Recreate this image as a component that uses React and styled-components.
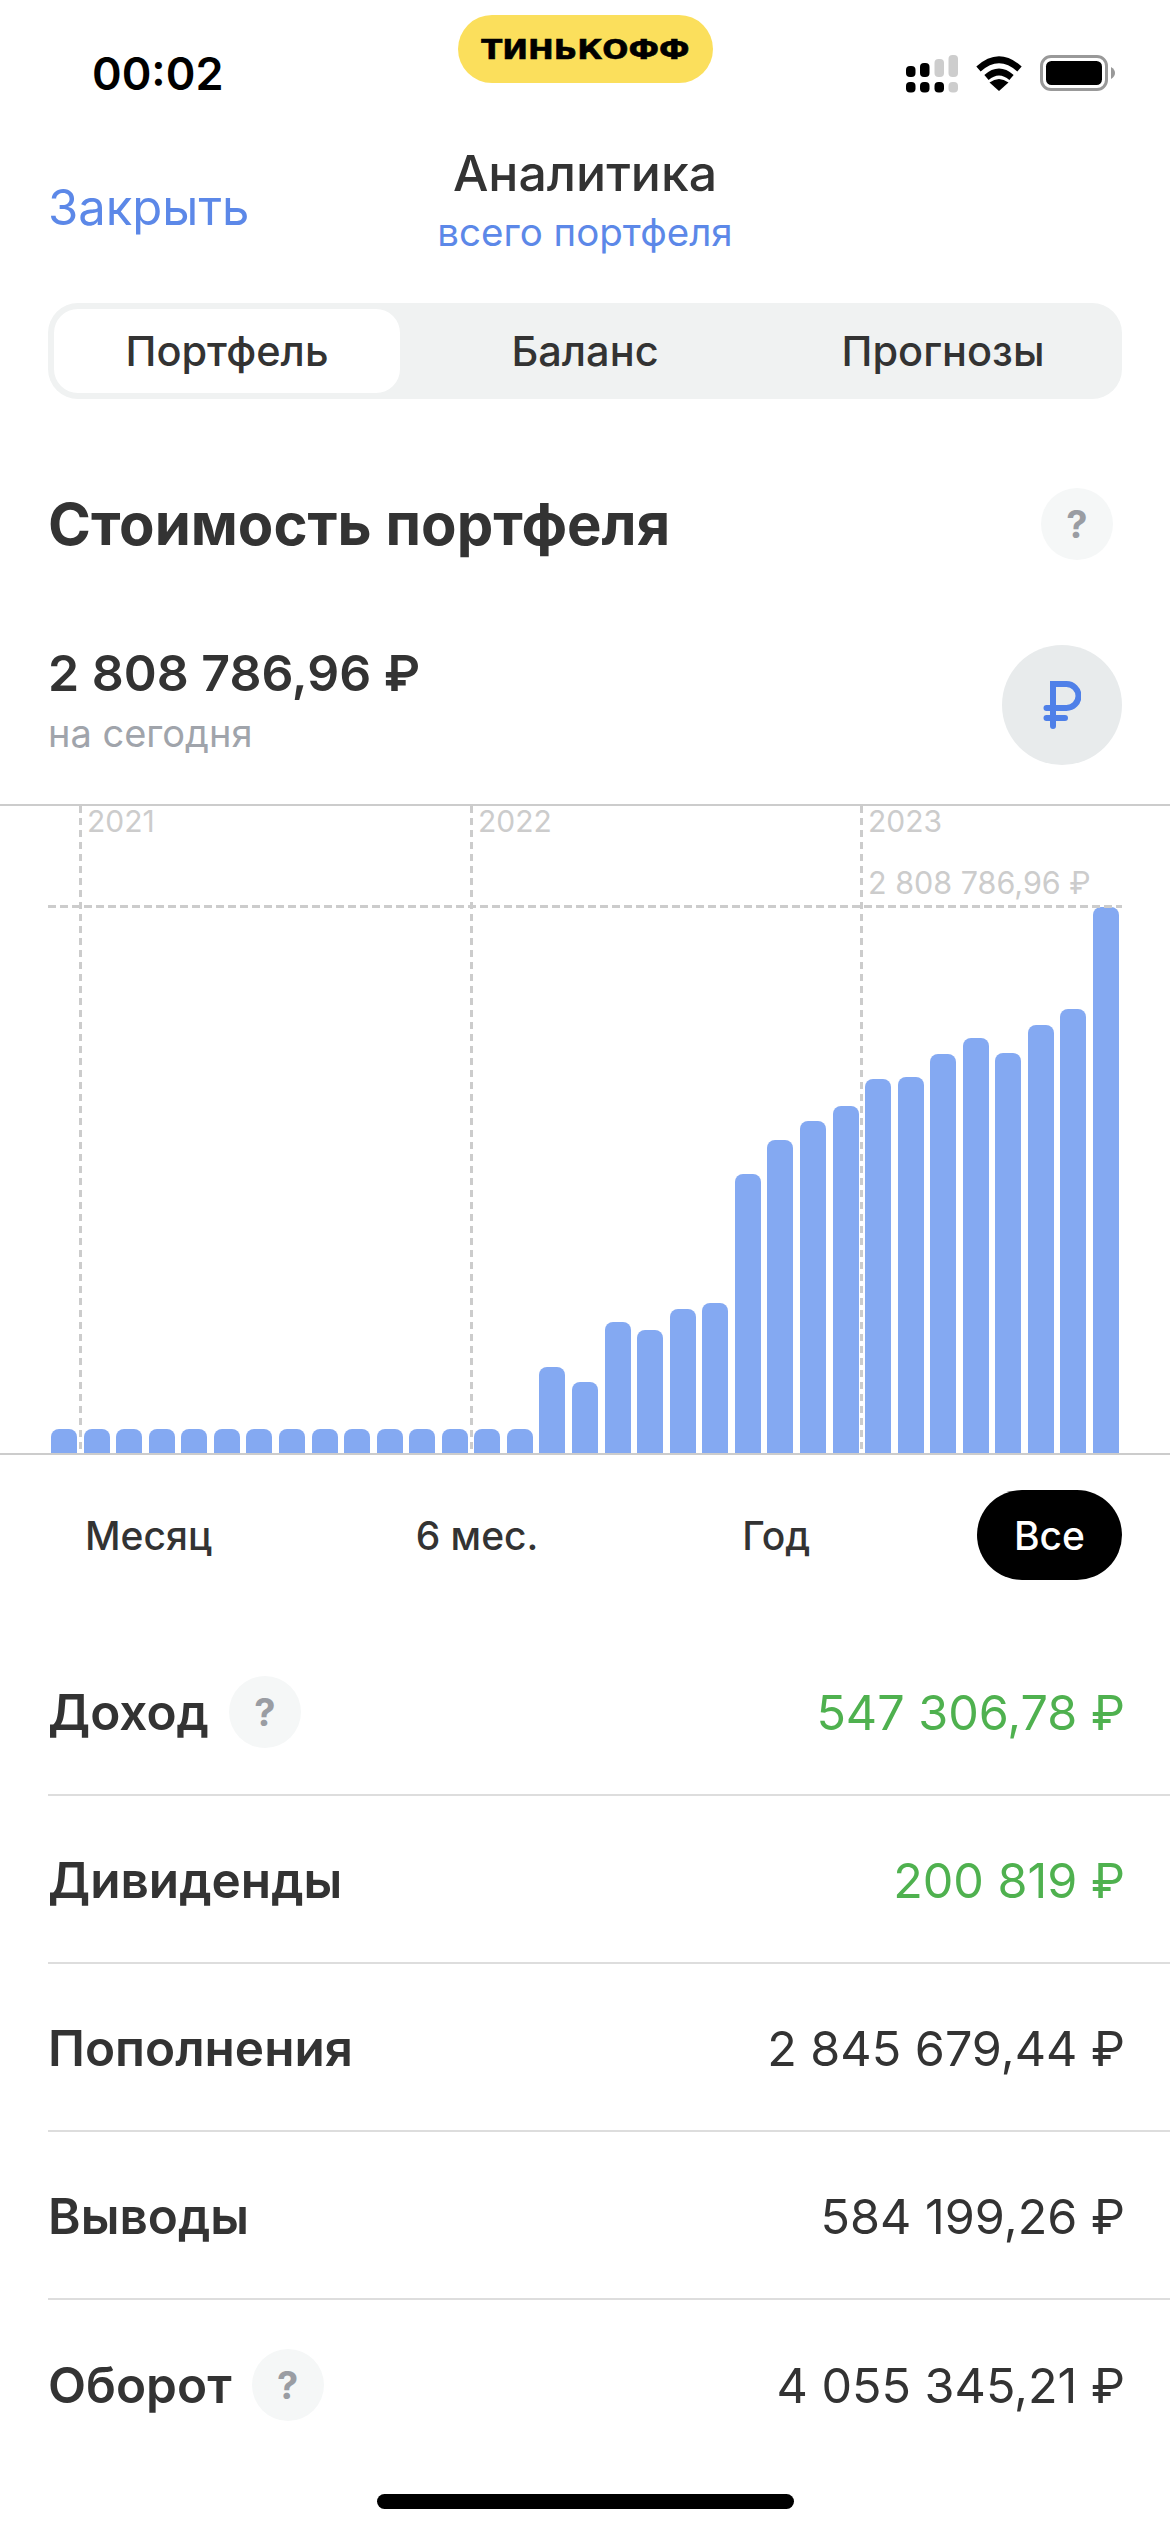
import React from "react";
import styled, {createGlobalStyle} from "styled-components";

const GlobalStyle = createGlobalStyle`
    html, body {
        margin: 0;
        padding: 0;
        background: #fff;
    }

    body {
        font-family: Inter, "Liberation Sans", sans-serif;
        color: #333;
        -webkit-font-smoothing: antialiased;
    }
`;

const barTops = [
    1429, 1429, 1429, 1429, 1429, 1429, 1429, 1429, 1429, 1429, 1429, 1429, 1429, 1429, 1429,
    1367, 1382, 1322, 1330, 1309, 1303, 1174, 1140, 1121, 1106, 1079, 1077, 1054, 1038, 1053, 1025, 1009, 907,
];
const CHART_BOTTOM = 1453;

const rows = [
    {label: "Доход", value: "547 306,78 ₽", green: true, help: true},
    {label: "Дивиденды", value: "200 819 ₽", green: true},
    {label: "Пополнения", value: "2 845 679,44 ₽"},
    {label: "Выводы", value: "584 199,26 ₽"},
    {label: "Оборот", value: "4 055 345,21 ₽", help: true},
];

const SignalIcon = () => (
    <svg width="52" height="38" viewBox="0 0 52 38">
        <g fill="#000">
            <rect x="0" y="11" width="9.5" height="11" rx="4"/>
            <rect x="14" y="8" width="9.5" height="14" rx="4"/>
            <rect x="0" y="27" width="9.5" height="10.5" rx="4"/>
            <rect x="14" y="27" width="9.5" height="10.5" rx="4"/>
            <rect x="28.5" y="27" width="9.5" height="10.5" rx="4"/>
        </g>
        <g fill="#cdcdcd">
            <rect x="28.5" y="4" width="9.5" height="18" rx="4"/>
            <rect x="42.5" y="0" width="9.5" height="22" rx="4"/>
            <rect x="42.5" y="27" width="9.5" height="10.5" rx="4"/>
        </g>
    </svg>
);

const WifiIcon = () => (
    <svg width="48" height="36" viewBox="0 0 48 36">
        <path d="M3.5 14 Q24 -4.5 44.5 14" fill="none" stroke="#000" strokeWidth="6.5"/>
        <path d="M11.5 22.5 Q24 11.5 36.5 22.5" fill="none" stroke="#000" strokeWidth="6.5"/>
        <path d="M24 36 L14.5 27.5 Q24 20.5 33.5 27.5 Z" fill="#000"/>
    </svg>
);

const BatteryIcon = () => (
    <svg width="75" height="36" viewBox="0 0 75 36">
        <rect x="1.5" y="1.5" width="65" height="33" rx="9.5" fill="none" stroke="#999" strokeWidth="3"/>
        <rect x="6" y="6" width="56" height="24" rx="5.5" fill="#000"/>
        <path d="M71 12 Q75 14.5 75 18 Q75 21.5 71 24 Z" fill="#999"/>
    </svg>
);

const RubleIcon = () => (
    <svg width="38" height="48" viewBox="0 0 38 48">
        <path
            d="M10 45 V3 H23.5 A12 12 0 0 1 23.5 27 H3.5 M3.5 37 H22"
            fill="none"
            stroke="#4f80e8"
            strokeWidth="6"
            strokeLinecap="round"
            strokeLinejoin="miter"
        />
    </svg>
);

function App() {
    return (
        <Page>
            <GlobalStyle/>
            <StatusBar>
                <Time>00:02</Time>
                <BrandPill><BrandText>ТИНЬКОФФ</BrandText></BrandPill>
                <StatusIcons>
                    <SignalIcon/>
                    <WifiIcon/>
                    <BatteryIcon/>
                </StatusIcons>
            </StatusBar>

            <Nav>
                <CloseLink>Закрыть</CloseLink>
                <NavTitle>
                    <NavHeading>Аналитика</NavHeading>
                    <NavSub>всего портфеля</NavSub>
                </NavTitle>
            </Nav>

            <Tabs>
                <Tab $active>Портфель</Tab>
                <Tab>Баланс</Tab>
                <Tab>Прогнозы</Tab>
            </Tabs>

            <TitleRow>
                <Title>Стоимость портфеля</Title>
                <HelpBadge>?</HelpBadge>
            </TitleRow>

            <ValueRow>
                <div>
                    <ValueText>2 808 786,96 ₽</ValueText>
                    <ValueCaption>на сегодня</ValueCaption>
                </div>
                <CurrencyButton><RubleIcon/></CurrencyButton>
            </ValueRow>

            <Chart>
                <YearLine $left={79}/>
                <YearLine $left={470}/>
                <YearLine $left={860}/>
                <MaxLine/>
                <YearLabel $left={87}>2021</YearLabel>
                <YearLabel $left={478}>2022</YearLabel>
                <YearLabel $left={868}>2023</YearLabel>
                <MaxLabel>2 808 786,96 ₽</MaxLabel>
                {barTops.map((top, i) => (
                    <Bar key={i} style={{height: CHART_BOTTOM - top}}/>
                ))}
            </Chart>

            <Periods>
                <Period>Месяц</Period>
                <Period>6 мес.</Period>
                <Period>Год</Period>
                <Period $active>Все</Period>
            </Periods>

            <List>
                {rows.map((row) => (
                    <Row key={row.label}>
                        <RowLabel>
                            {row.label}
                            {row.help && <HelpBadge>?</HelpBadge>}
                        </RowLabel>
                        <RowValue $green={row.green}>{row.value}</RowValue>
                    </Row>
                ))}
            </List>

            <HomeIndicator/>
        </Page>
    );
}

export default App;

const Page = styled.div`
    width: 1170px;
    height: 2532px;
    overflow: hidden;
    display: flex;
    flex-direction: column;
    background: #fff;
`;

const StatusBar = styled.div`
    height: 130px;
    padding: 0 55px 0 92px;
    box-sizing: border-box;
    display: grid;
    grid-template-columns: 1fr 255px 1fr;
    align-items: start;
`;

const Time = styled.div`
    margin-top: 46px;
    font-size: 45px;
    line-height: 56px;
    font-weight: 600;
    color: #000;
`;

const BrandPill = styled.div`
    margin-top: 15px;
    margin-left: -18px;
    width: 255px;
    height: 68px;
    border-radius: 34px;
    background: #fbdf5c;
    display: flex;
    align-items: center;
    justify-content: center;
`;

const BrandText = styled.span`
    font-family: "DejaVu Sans", sans-serif;
    font-size: 27px;
    font-weight: 700;
    line-height: 1;
    color: #000;
    white-space: nowrap;
    transform: scaleX(1.14);
    -webkit-text-stroke: 0.6px #000;
`;

const StatusIcons = styled.div`
    margin-top: 55px;
    display: flex;
    justify-content: flex-end;
    align-items: flex-start;
    gap: 17px;
`;

const Nav = styled.div`
    height: 173px;
    padding: 0 48px;
    display: grid;
    grid-template-columns: 1fr auto 1fr;
    align-items: start;
    box-sizing: border-box;
`;

const CloseLink = styled.div`
    grid-column: 1;
    margin-top: 48px;
    font-size: 49px;
    line-height: 60px;
    color: #5c88e8;
`;

const NavTitle = styled.div`
    grid-column: 2;
    padding-top: 13px;
    display: flex;
    flex-direction: column;
    align-items: center;
`;

const NavHeading = styled.div`
    font-size: 50px;
    line-height: 60px;
    font-weight: 500;
`;

const NavSub = styled.div`
    margin-top: 4px;
    font-size: 38.5px;
    line-height: 50px;
    color: #5c88e8;
`;

const Tabs = styled.div`
    margin: 0 48px;
    height: 96px;
    padding: 6px;
    box-sizing: border-box;
    border-radius: 30px;
    background: #f0f2f2;
    display: grid;
    grid-template-columns: 346px 370px 346px;
`;

const Tab = styled.div`
    border-radius: 24px;
    background: ${(p) => (p.$active ? "#fff" : "transparent")};
    display: flex;
    align-items: center;
    justify-content: center;
    font-size: 41.5px;
    font-weight: 500;
`;

const TitleRow = styled.div`
    margin-top: 89px;
    padding: 0 57px 0 48px;
    display: flex;
    align-items: center;
    justify-content: space-between;
`;

const Title = styled.h1`
    margin: 0;
    font-size: 58px;
    line-height: 72px;
    font-weight: 700;
`;

const HelpBadge = styled.span`
    flex: none;
    width: 72px;
    height: 72px;
    border-radius: 50%;
    background: #f5f7f7;
    color: #9a9da3;
    display: inline-flex;
    align-items: center;
    justify-content: center;
    font-size: 38px;
    font-weight: 700;
`;

const ValueRow = styled.div`
    margin-top: 85px;
    padding: 0 48px;
    display: flex;
    align-items: flex-start;
    justify-content: space-between;
`;

const ValueText = styled.div`
    font-size: 50px;
    line-height: 56px;
    font-weight: 600;
`;

const ValueCaption = styled.div`
    margin-top: 8px;
    font-size: 38px;
    line-height: 48px;
    color: #a0a4ab;
`;

const CurrencyButton = styled.div`
    width: 120px;
    height: 120px;
    border-radius: 50%;
    background: #e8ebec;
    display: flex;
    align-items: center;
    justify-content: center;
`;

const Chart = styled.div`
    position: relative;
    margin-top: 39px;
    height: 651px;
    box-sizing: border-box;
    padding: 0 51px;
    border-top: 2px solid #ccc;
    border-bottom: 2px solid #ccc;
    display: flex;
    align-items: flex-end;
    gap: 6.56px;
`;

const Bar = styled.div`
    flex: 1;
    border-radius: 8px 8px 0 0;
    background: #84a9f2;
`;

const YearLine = styled.div`
    position: absolute;
    top: 0;
    bottom: 0;
    left: ${(p) => p.$left}px;
    width: 3px;
    background: repeating-linear-gradient(to bottom, #ccc 0 7px, transparent 7px 12px);
`;

const MaxLine = styled.div`
    position: absolute;
    top: 99px;
    left: 48px;
    right: 48px;
    height: 3px;
    background: repeating-linear-gradient(to right, #ccc 0 8px, transparent 8px 12px);
`;

const YearLabel = styled.div`
    position: absolute;
    top: 0;
    left: ${(p) => p.$left}px;
    font-size: 30px;
    line-height: 30px;
    color: #ccc;
`;

const MaxLabel = styled.div`
    position: absolute;
    top: 62px;
    left: 868px;
    font-size: 30.5px;
    line-height: 30px;
    color: #ccc;
    white-space: nowrap;
`;

const Periods = styled.div`
    margin-top: 35px;
    padding: 0 48px;
    display: flex;
    justify-content: space-between;
`;

const Period = styled.div`
    height: 90px;
    padding: 0 37px;
    border-radius: 45px;
    background: ${(p) => (p.$active ? "#000" : "transparent")};
    color: ${(p) => (p.$active ? "#fff" : "#333")};
    display: flex;
    align-items: center;
    font-size: 39px;
    font-weight: 500;
`;

const List = styled.div`
    margin-top: 48px;
    margin-left: 48px;
`;

const Row = styled.div`
    height: 168px;
    box-sizing: border-box;
    padding: 2px 45px 0 0;
    border-bottom: 2px solid #ddd;
    display: flex;
    align-items: center;
    justify-content: space-between;

    &:last-child {
        border-bottom: none;
    }
`;

const RowLabel = styled.div`
    display: flex;
    align-items: center;
    gap: 20px;
    font-size: 49.5px;
    font-weight: 600;
`;

const RowValue = styled.div`
    font-size: 48.5px;
    color: ${(p) => (p.$green ? "#4fb14f" : "#333")};
`;

const HomeIndicator = styled.div`
    align-self: center;
    margin-top: 26px;
    width: 417px;
    height: 15px;
    border-radius: 8px;
    background: #000;
`;
